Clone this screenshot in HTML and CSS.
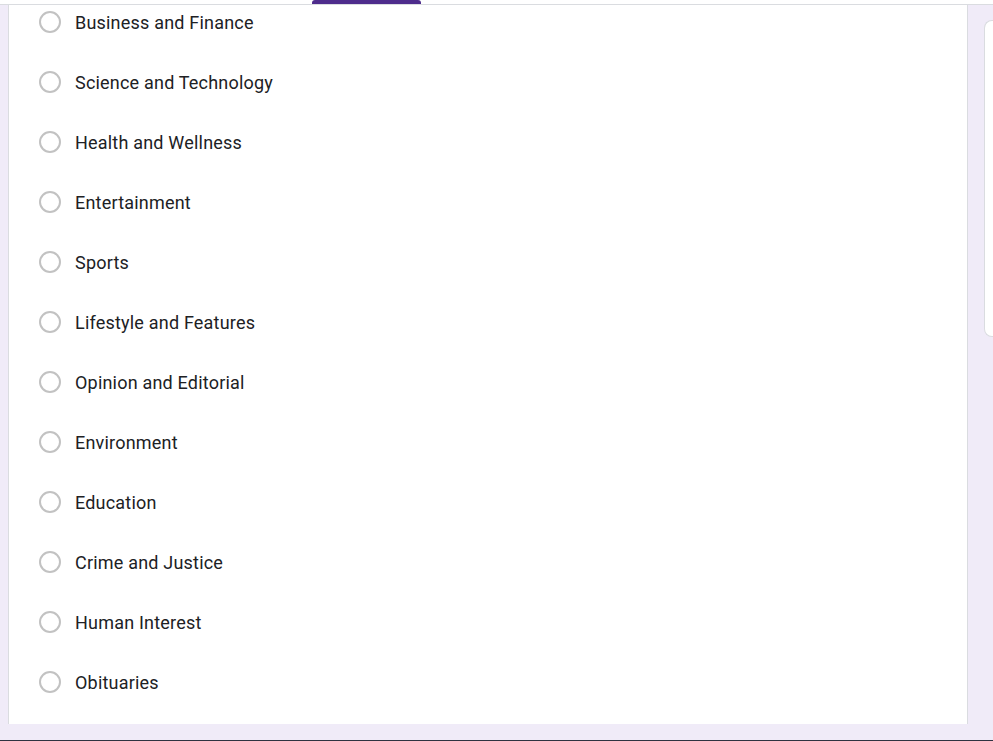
FILE: index.html
```html
<!DOCTYPE html>
<html>
<head>
<meta charset="utf-8">
<link rel="stylesheet" href="styles.css">
</head>
<body>
<div class="page">
  <div class="topbar"><div class="tab"></div></div>
  <div class="main">
    <div class="card">
      <div class="options">
        <label class="option"><span class="radio"></span><span class="text">Business and Finance</span></label>
        <label class="option"><span class="radio"></span><span class="text">Science and Technology</span></label>
        <label class="option"><span class="radio"></span><span class="text">Health and Wellness</span></label>
        <label class="option"><span class="radio"></span><span class="text">Entertainment</span></label>
        <label class="option"><span class="radio"></span><span class="text">Sports</span></label>
        <label class="option"><span class="radio"></span><span class="text">Lifestyle and Features</span></label>
        <label class="option"><span class="radio"></span><span class="text">Opinion and Editorial</span></label>
        <label class="option"><span class="radio"></span><span class="text">Environment</span></label>
        <label class="option"><span class="radio"></span><span class="text">Education</span></label>
        <label class="option"><span class="radio"></span><span class="text">Crime and Justice</span></label>
        <label class="option"><span class="radio"></span><span class="text">Human Interest</span></label>
        <label class="option"><span class="radio"></span><span class="text">Obituaries</span></label>
      </div>
    </div>
    <div class="side">
      <div class="toolbar"></div>
    </div>
  </div>
  <div class="bottomline"></div>
</div>
</body>
</html>
```

FILE: styles.css
```css
html, body {
  margin: 0;
  padding: 0;
  background: #f0ebf8;
  font-family: Roboto, "Liberation Sans", sans-serif;
}
.page {
  width: 993px;
  height: 741px;
  overflow: hidden;
  display: flex;
  flex-direction: column;
}
.topbar {
  height: 4px;
  background: #ffffff;
  border-bottom: 1px solid #dadce0;
  flex: none;
}
.tab {
  margin-left: 312px;
  width: 109px;
  height: 4px;
  background: #4e2c8c;
  border-radius: 3px 3px 0 0;
}
.main {
  display: flex;
  padding-left: 8px;
  flex: none;
}
.card {
  height: 719px;
  box-sizing: border-box;
  width: 960px;
  background: #ffffff;
  border-left: 1px solid #dadce0;
  border-right: 1px solid #dadce0;
  padding: 5px 0 0 30px;
}
.options {
  display: flex;
  flex-direction: column;
  gap: 36px;
}
.option {
  display: flex;
  align-items: center;
  height: 24px;
  gap: 14px;
}
.radio {
  width: 22px;
  height: 22px;
  box-sizing: border-box;
  border: 2px solid #c2c2c2;
  border-radius: 50%;
  flex: none;
}
.text {
  font-size: 18px;
  color: #202124;
  letter-spacing: 0.2px;
}
.side {
  margin-left: 16px;
  padding-top: 15px;
  flex: 1;
}
.toolbar {
  height: 315px;
  background: #ffffff;
  border: 1px solid #dadce0;
  border-right: none;
  border-radius: 8px 0 0 8px;
}
.bottomline {
  margin-top: auto;
  height: 1px;
  background: #2e3240;
  flex: none;
}
```
